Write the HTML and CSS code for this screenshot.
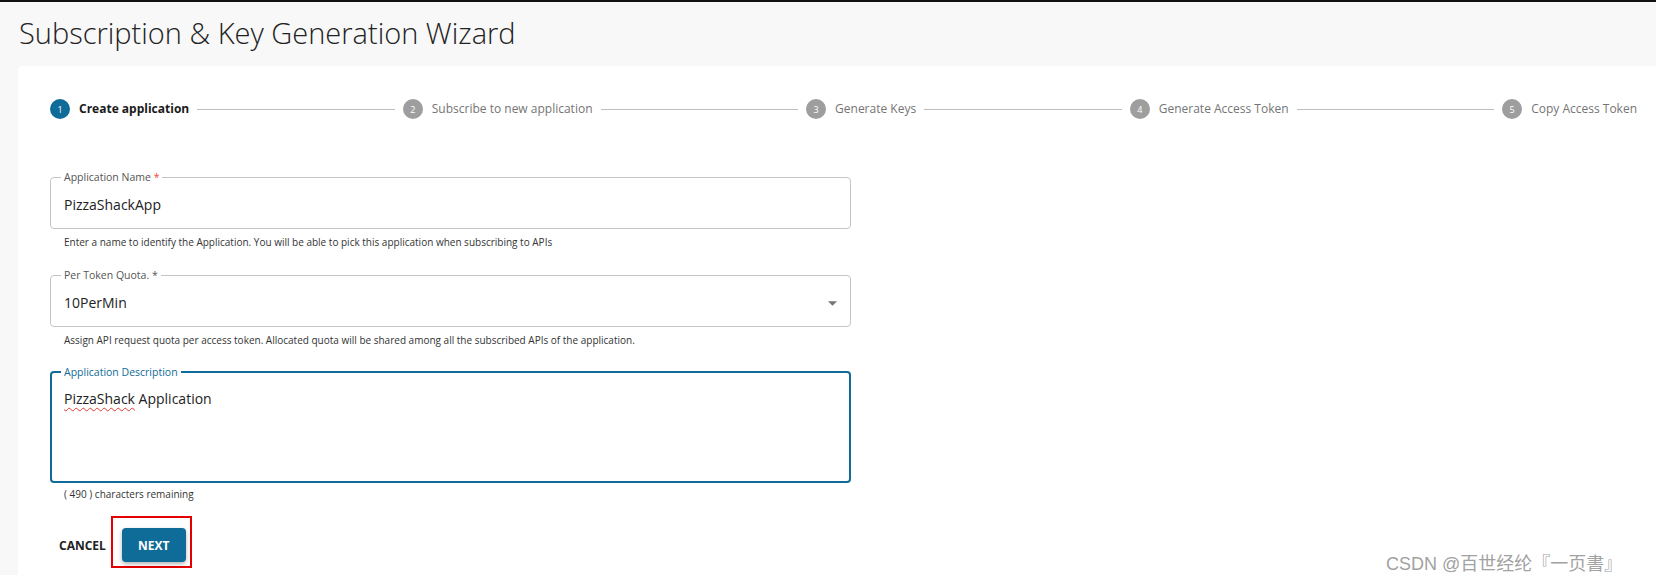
FILE: index.html
```html
<!DOCTYPE html>
<html lang="en">
<head>
<meta charset="utf-8">
<title>Subscription &amp; Key Generation Wizard</title>
<link rel="stylesheet" href="styles.css">
</head>
<body>
<div class="page">
  <h1 class="title">Subscription &amp; Key Generation Wizard</h1>
  <div class="card">
    <div class="stepper">
      <div class="step active"><span class="step-icon">1</span><span class="step-label">Create application</span></div>
      <div class="connector"></div>
      <div class="step"><span class="step-icon">2</span><span class="step-label">Subscribe to new application</span></div>
      <div class="connector"></div>
      <div class="step"><span class="step-icon">3</span><span class="step-label">Generate Keys</span></div>
      <div class="connector"></div>
      <div class="step"><span class="step-icon">4</span><span class="step-label">Generate Access Token</span></div>
      <div class="connector"></div>
      <div class="step"><span class="step-icon">5</span><span class="step-label">Copy Access Token</span></div>
    </div>

    <form class="form">
      <fieldset class="field">
        <legend>Application Name <span class="req">*</span></legend>
        <div class="value">PizzaShackApp</div>
      </fieldset>
      <p class="helper">Enter a name to identify the Application. You will be able to pick this application when subscribing to APIs</p>

      <fieldset class="field field-gap">
        <legend>Per Token Quota. *</legend>
        <div class="select-row">
          <div class="value">10PerMin</div>
          <svg class="arrow" width="9" height="5" viewBox="0 0 10 5"><path d="M0 0l5 5 5-5z" fill="#757575"/></svg>
        </div>
      </fieldset>
      <p class="helper">Assign API request quota per access token. Allocated quota will be shared among all the subscribed APIs of the application.</p>

      <fieldset class="field field-focused">
        <legend>Application Description</legend>
        <div class="value value-area"><span class="misspelled">PizzaShack</span> Application</div>
      </fieldset>
      <p class="helper helper-tight">( 490 ) characters remaining</p>

      <div class="actions">
        <button type="button" class="cancel">CANCEL</button>
        <div class="highlight">
          <button type="button" class="next">NEXT</button>
        </div>
      </div>
    </form>
  </div>
  <div class="watermark">CSDN @百世经纶『一页書』</div>
</div>
</body>
</html>
```

FILE: styles.css
```css
html, body {
  margin: 0;
  padding: 0;
}

body {
  background: #f8f8f8;
  font-family: "Open Sans", "Noto Sans", sans-serif;
  border-top: 2px solid #111;
  height: 573px;
  overflow: hidden;
}

.page {
  position: relative;
  height: 100%;
}

.title {
  margin: 11px 0 0 19px;
  font-size: 29px;
  font-weight: 300;
  line-height: 40px;
  color: #222;
}

.card {
  margin: 13px 0 0 18px;
  background: #fff;
  border-radius: 4px 0 0 0;
  padding: 33px 19px 7px 32px;
}

.stepper {
  display: flex;
  align-items: center;
  height: 20px;
}

.step {
  display: flex;
  align-items: center;
  padding: 0 8px;
}

.step:first-child {
  padding-left: 0;
}

.step:last-child {
  padding-right: 0;
}

.step-icon {
  width: 20px;
  height: 20px;
  border-radius: 50%;
  background: #9e9e9e;
  color: #fff;
  font-size: 9px;
  display: flex;
  align-items: center;
  justify-content: center;
  margin-right: 9px;
}

.step.active .step-icon {
  background: #0f6b98;
}

.step-label {
  font-size: 12px;
  line-height: 16px;
  color: #757575;
  white-space: nowrap;
}

.step.active .step-label {
  color: #1a1a1a;
  font-weight: 700;
}

.connector {
  flex: 1;
  border-top: 1px solid #bdbdbd;
}

.form {
  width: 801px;
  margin-top: 52px;
}

.field {
  margin: 0;
  border: 1px solid #c4c4c4;
  border-radius: 4px;
  padding: 0 10px 11px;
  min-width: 0;
}

.field legend {
  padding: 0 3px;
  font-size: 10.5px;
  line-height: 12px;
  color: #555;
}

.req {
  color: #f44336;
}

.field-gap {
  margin-top: 20px;
}

.value {
  padding: 10px 3px 0;
  font-size: 14px;
  line-height: 24px;
  color: #222;
}

.select-row {
  display: flex;
  align-items: center;
  justify-content: space-between;
  padding-right: 3px;
}

.arrow {
  margin-top: 10px;
}

.field-focused {
  margin-top: 19px;
  border: 2px solid #0f6b98;
  padding: 0 9px;
}

.field-focused legend {
  color: #0f6b98;
}

.value-area {
  padding-top: 9px;
  height: 103px;
  box-sizing: border-box;
}

.misspelled {
  text-decoration: underline wavy #e53935;
  text-decoration-thickness: 1px;
  text-underline-offset: 3px;
}

.helper {
  margin: 6px 0 0 14px;
  font-size: 10px;
  line-height: 14px;
  color: #333;
}

.helper-tight {
  margin-top: 4px;
}

.actions {
  display: flex;
  align-items: flex-start;
  margin-top: 15px;
}

.cancel {
  margin: 12px 5px 0 9px;
  padding: 0;
  height: 34px;
  border: 0;
  background: transparent;
  font-family: "Open Sans", sans-serif;
  font-weight: 700;
  font-size: 12px;
  color: #222;
}

.highlight {
  border: 2px solid #e50000;
  padding: 10px 4px 4px 9px;
}

.next {
  display: block;
  width: 64px;
  height: 34px;
  background: #0f6b98;
  color: #fff;
  border: 0;
  border-radius: 4px;
  font-family: "Open Sans", sans-serif;
  font-weight: 700;
  font-size: 12px;
  box-shadow: 0 2px 4px rgba(0, 0, 0, 0.3);
}

.watermark {
  position: absolute;
  left: 1386px;
  top: 539px;
  font-family: "Liberation Sans", "Noto Sans CJK SC", sans-serif;
  font-size: 18px;
  line-height: 24px;
  color: #a2a2a2;
  white-space: nowrap;
}
```
